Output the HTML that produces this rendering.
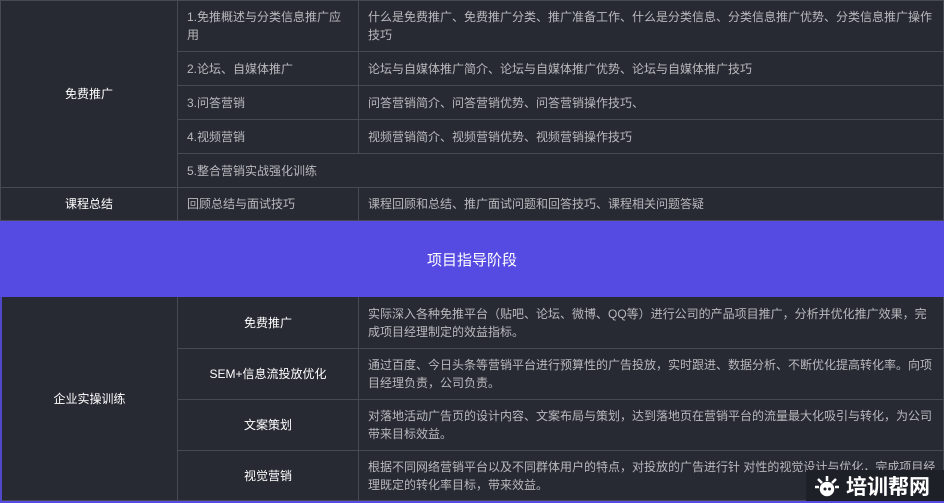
<!DOCTYPE html>
<html><head><meta charset="utf-8"><style>
*{margin:0;padding:0;box-sizing:border-box}
body{width:944px;height:503px;background:#272a33;overflow:hidden;position:relative;font-family:"Liberation Sans","Noto Sans CJK SC",sans-serif;font-size:12px}
.c{position:absolute;border-right:1px solid #454a54;border-bottom:1px solid #454a54;display:flex;align-items:center;color:#b8b9bd;line-height:18px;padding:0 9px}
.h{justify-content:center;color:#fff;padding:0}
.b{font-weight:normal}
</style></head><body>
<div style="position:absolute;left:0;top:0;width:944px;height:221px;border-left:1px solid #454a54;border-top:1px solid #454a54"></div>
<div class="c h" style="left:1px;top:1px;width:177px;height:187px">免费推广</div>
<div class="c" style="left:178px;top:1px;width:181px;height:51px">1.免推概述与分类信息推广应用</div>
<div class="c" style="left:359px;top:1px;width:585px;height:51px">什么是免费推广、免费推广分类、推广准备工作、什么是分类信息、分类信息推广优势、分类信息推广操作技巧</div>
<div class="c" style="left:178px;top:52px;width:181px;height:34px">2.论坛、自媒体推广</div>
<div class="c" style="left:359px;top:52px;width:585px;height:34px">论坛与自媒体推广简介、论坛与自媒体推广优势、论坛与自媒体推广技巧</div>
<div class="c" style="left:178px;top:86px;width:181px;height:34px">3.问答营销</div>
<div class="c" style="left:359px;top:86px;width:585px;height:34px">问答营销简介、问答营销优势、问答营销操作技巧、</div>
<div class="c" style="left:178px;top:120px;width:181px;height:34px">4.视频营销</div>
<div class="c" style="left:359px;top:120px;width:585px;height:34px">视频营销简介、视频营销优势、视频营销操作技巧</div>
<div class="c" style="left:178px;top:154px;width:766px;height:34px">5.整合营销实战强化训练</div>
<div class="c h" style="left:1px;top:188px;width:177px;height:33px">课程总结</div>
<div class="c" style="left:178px;top:188px;width:181px;height:33px">回顾总结与面试技巧</div>
<div class="c" style="left:359px;top:188px;width:585px;height:33px">课程回顾和总结、推广面试问题和回答技巧、课程相关问题答疑</div>
<div style="position:absolute;left:0;top:221px;width:944px;height:76px;background:#554ae1;color:#fff;font-size:15px;display:flex;align-items:center;justify-content:center">项目指导阶段</div>
<div style="position:absolute;left:0;top:297px;width:2px;height:206px;background:#4f49c9"></div>
<div style="position:absolute;left:0;top:501px;width:944px;height:2px;background:#554ae1"></div>
<div class="c h b" style="left:2px;top:297px;width:176px;height:204px">企业实操训练</div>
<div class="c h b" style="left:178px;top:297px;width:181px;height:52px">免费推广</div>
<div class="c" style="left:359px;top:297px;width:585px;height:52px">实际深入各种免推平台（贴吧、论坛、微博、QQ等）进行公司的产品项目推广，分析并优化推广效果，完成项目经理制定的效益指标。</div>
<div class="c h b" style="left:178px;top:349px;width:181px;height:51px">SEM+信息流投放优化</div>
<div class="c" style="left:359px;top:349px;width:585px;height:51px">通过百度、今日头条等营销平台进行预算性的广告投放，实时跟进、数据分析、不断优化提高转化率。向项目经理负责，公司负责。</div>
<div class="c h b" style="left:178px;top:400px;width:181px;height:51px">文案策划</div>
<div class="c" style="left:359px;top:400px;width:585px;height:51px">对落地活动广告页的设计内容、文案布局与策划，达到落地页在营销平台的流量最大化吸引与转化，为公司带来目标效益。</div>
<div class="c h b" style="left:178px;top:451px;width:181px;height:50px">视觉营销</div>
<div class="c" style="left:359px;top:451px;width:585px;height:50px;padding-right:4px">根据不同网络营销平台以及不同群体用户的特点，对投放的广告进行针 对性的视觉设计与优化，完成项目经理既定的转化率目标，带来效益。</div>
<div style="position:absolute;left:806px;top:470px;width:138px;height:31px;background:#1e2027;color:#fff;font-size:21px;font-weight:bold;display:flex;align-items:center;padding-left:8px;gap:6px">
<svg width="26" height="24" viewBox="0 0 26 24"><g stroke="#fff" stroke-width="2.5" fill="none"><circle cx="13" cy="15" r="6" fill="#fff"/><path d="M13 2v5M4 5l4 4M22 5l-4 4M1 13h4M25 13h-4"/></g><circle cx="11" cy="15" r="1.5" fill="#1e2027"/><circle cx="15.5" cy="15" r="1.5" fill="#1e2027"/></svg>培训帮网</div>
</body></html>
